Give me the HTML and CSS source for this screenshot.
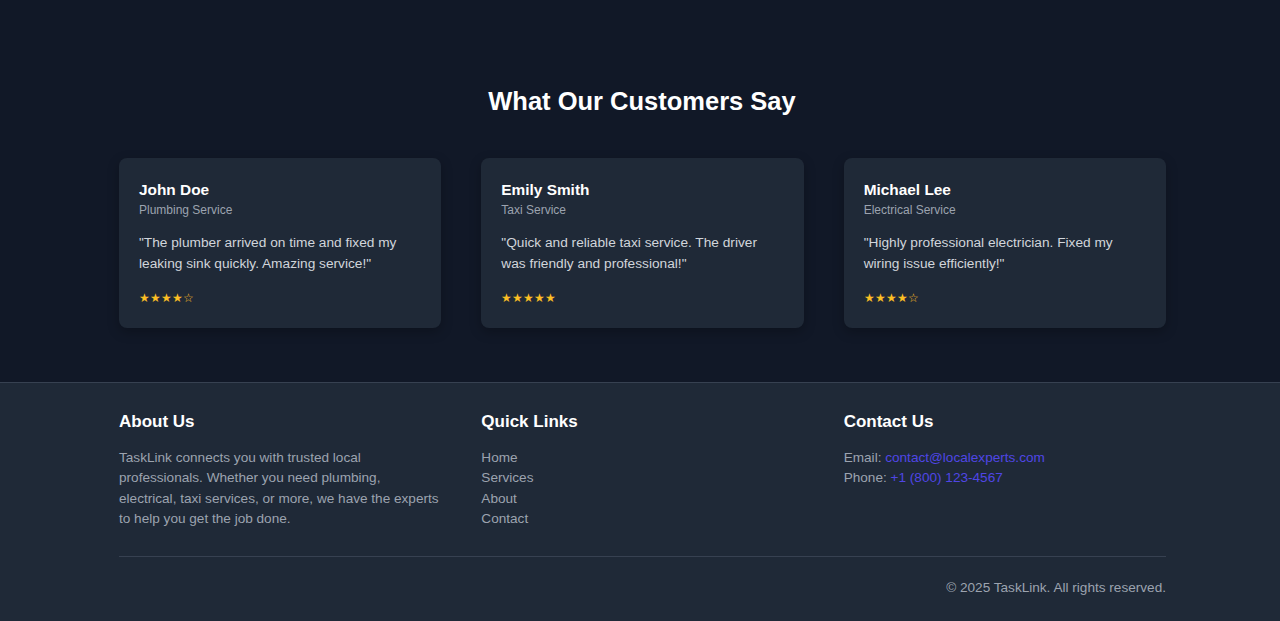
FILE: index.html
```html
<!DOCTYPE html>
<html lang="en">
<head>
<meta charset="utf-8">
<title>TaskLink</title>
<link rel="stylesheet" href="styles.css">
</head>
<body>
<section class="testimonials">
  <h2 class="section-title">What Our Customers Say</h2>
  <div class="container grid">
    <div class="card">
      <h3 class="name">John Doe</h3>
      <p class="service">Plumbing Service</p>
      <p class="quote">"The plumber arrived on time and fixed my leaking sink quickly. Amazing service!"</p>
      <div class="stars">★★★★☆</div>
    </div>
    <div class="card">
      <h3 class="name">Emily Smith</h3>
      <p class="service">Taxi Service</p>
      <p class="quote">"Quick and reliable taxi service. The driver was friendly and professional!"</p>
      <div class="stars">★★★★★</div>
    </div>
    <div class="card">
      <h3 class="name">Michael Lee</h3>
      <p class="service">Electrical Service</p>
      <p class="quote">"Highly professional electrician. Fixed my wiring issue efficiently!"</p>
      <div class="stars">★★★★☆</div>
    </div>
  </div>
</section>
<footer class="footer">
  <div class="container grid">
    <div class="col">
      <h4 class="col-title">About Us</h4>
      <p class="col-text">TaskLink connects you with trusted local professionals. Whether you need plumbing, electrical, taxi services, or more, we have the experts to help you get the job done.</p>
    </div>
    <div class="col">
      <h4 class="col-title">Quick Links</h4>
      <ul class="links">
        <li><a href="#">Home</a></li>
        <li><a href="#">Services</a></li>
        <li><a href="#">About</a></li>
        <li><a href="#">Contact</a></li>
      </ul>
    </div>
    <div class="col">
      <h4 class="col-title">Contact Us</h4>
      <p class="col-text">Email: <a class="accent" href="#">contact@localexperts.com</a><br>Phone: <a class="accent" href="#">+1 (800) 123-4567</a></p>
    </div>
  </div>
  <div class="container bottom">
    <p class="copy">© 2025 TaskLink. All rights reserved.</p>
  </div>
</footer>
</body>
</html>
```
FILE: styles.css
```css
* { box-sizing: border-box; }
html, body { margin: 0; padding: 0; }
body {
  font-family: "Liberation Sans", Arial, sans-serif;
  background: #111827;
  color: #fff;
}
.container {
  width: 1047px;
  margin-left: 119px;
}
.grid {
  display: grid;
  grid-template-columns: repeat(3, 1fr);
  column-gap: 40px;
}
.testimonials {
  padding: 84px 0 54px;
}
.section-title {
  margin: 0 0 40px;
  padding-left: 4px;
  text-align: center;
  font-size: 25.5px;
  line-height: 34px;
  font-weight: 700;
}
.card {
  background: #1f2937;
  border-radius: 8px;
  padding: 21px 21px 20px 20px;
  box-shadow: 0 4px 12px rgba(0,0,0,0.25);
}
.name {
  margin: 0;
  font-size: 15.4px;
  line-height: 22px;
  font-weight: 700;
}
.service {
  margin: 0;
  font-size: 12px;
  line-height: 18px;
  color: #9ca3af;
}
.quote {
  margin: 14px 0 0;
  font-size: 13.7px;
  line-height: 20.5px;
  color: #d1d5db;
}
.stars {
  margin-top: 14px;
  font-size: 12.2px;
  line-height: 20px;
  color: #fbbf24;
}
.footer {
  background: #1f2937;
  border-top: 1px solid #374151;
  padding: 25px 0 24px;
}
.col-title {
  margin: 0 0 12px;
  font-size: 17px;
  line-height: 28px;
  font-weight: 700;
}
.col-text {
  margin: 0;
  font-size: 13.6px;
  line-height: 20.3px;
  color: #9ca3af;
}
.links {
  list-style: none;
  margin: 0;
  padding: 0;
  font-size: 13.6px;
  line-height: 20.3px;
}
.links a {
  color: #9ca3af;
  text-decoration: none;
}
.accent {
  color: #4f46e5;
  text-decoration: none;
}
.bottom {
  margin-top: 27px;
  border-top: 1px solid #374151;
  padding-top: 21px;
}
.copy {
  margin: 0;
  text-align: right;
  font-size: 13.6px;
  line-height: 20px;
  color: #9ca3af;
}
```
